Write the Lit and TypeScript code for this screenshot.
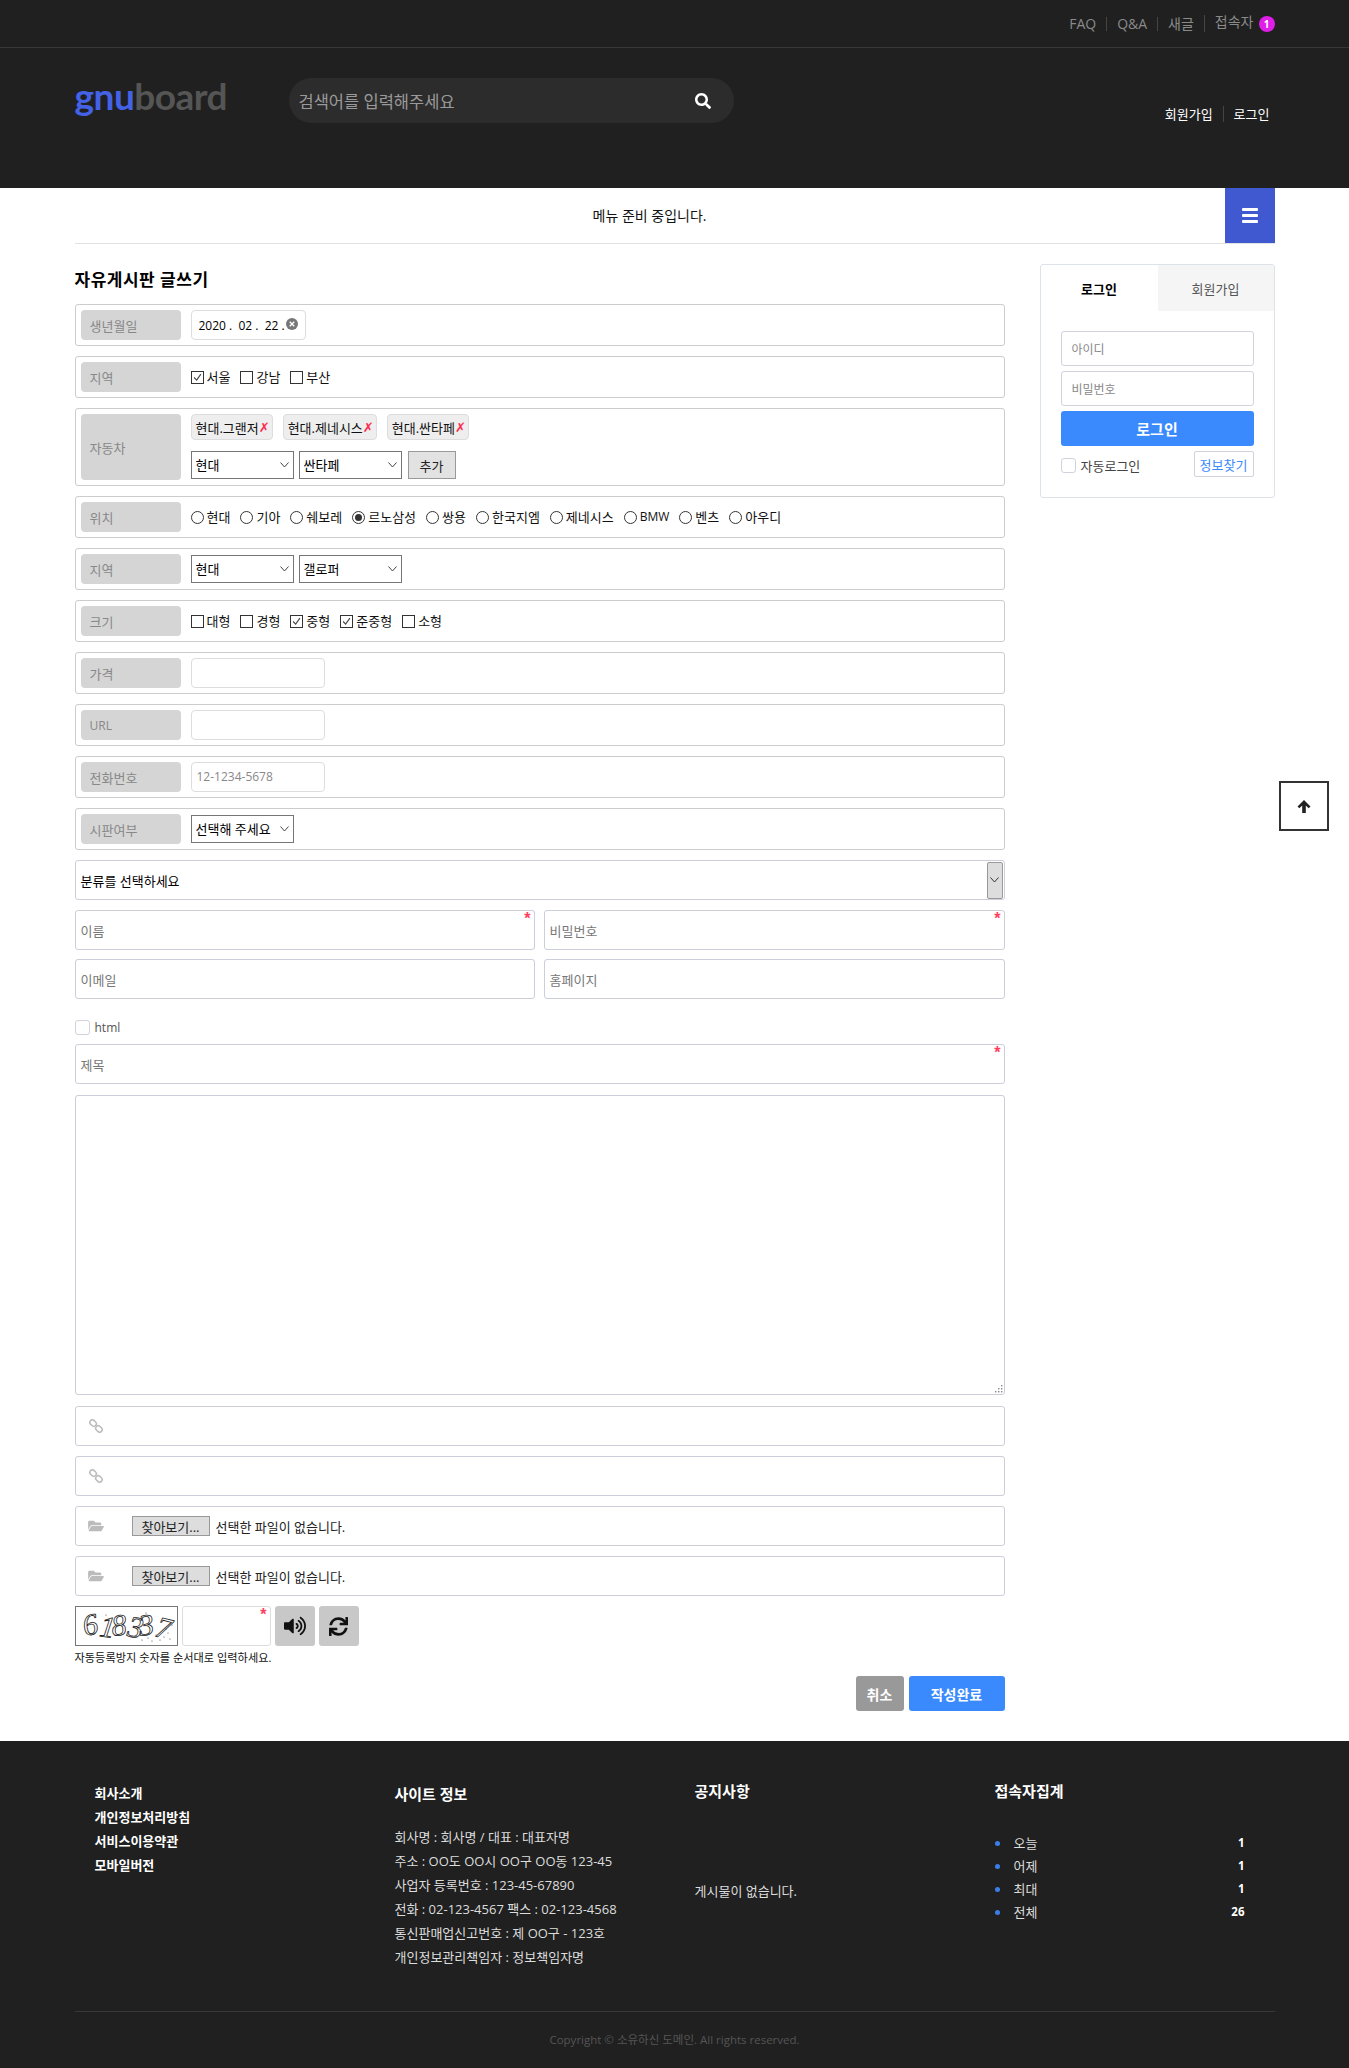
import { LitElement, html, css, svg } from "lit";
import { customElement } from "lit/decorators.js";

const I = {
  search: "M505 442.7L405.3 343c-4.5-4.5-10.6-7-17-7H372c27.6-35.3 44-79.7 44-128C416 93.1 322.9 0 208 0S0 93.1 0 208s93.1 208 208 208c48.3 0 92.7-16.4 128-44v16.3c0 6.4 2.5 12.5 7 17l99.7 99.7c9.4 9.4 24.6 9.4 33.9 0l28.3-28.3c9.4-9.4 9.4-24.6.1-34zM208 336c-70.7 0-128-57.2-128-128 0-70.7 57.2-128 128-128 70.7 0 128 57.2 128 128 0 70.7-57.2 128-128 128z",
  up: "M7 0l6.5 6.5-1.8 1.8L8.8 5.4V13H5.2V5.4L2.3 8.3 .5 6.5z",
  folder: "M572.694 292.093L500.27 416.248A63.997 63.997 0 0 1 444.989 448H45.025c-18.523 0-30.064-20.093-20.731-36.093l72.424-124.155A64 64 0 0 1 152 256h399.964c18.523 0 30.064 20.093 20.73 36.093zM152 224h328v-48c0-26.51-21.49-48-48-48H272l-64-64H48C21.49 64 0 85.49 0 112v278.046l69.077-118.418C86.214 242.25 117.989 224 152 224z",
  volume: "M215.03 71.05L126.06 160H24c-13.26 0-24 10.74-24 24v144c0 13.25 10.74 24 24 24h102.06l88.97 88.95c15.03 15.03 40.97 4.47 40.97-16.97V88.02c0-21.46-25.96-32-40.97-16.97zm233.32-51.08c-11.17-7.33-26.18-4.24-33.51 6.95-7.34 11.17-4.22 26.18 6.95 33.51 66.27 43.49 105.82 116.6 105.82 195.58 0 78.98-39.55 152.09-105.82 195.58-11.17 7.32-14.29 22.34-6.95 33.5 7.04 10.71 21.93 14.56 33.51 6.95C528.27 439.58 576 351.33 576 256S528.27 72.43 448.35 19.97zM480 256c0-63.53-32.06-121.94-85.77-156.24-11.19-7.14-26.03-3.82-33.12 7.46s-3.78 26.21 7.41 33.36C408.27 165.97 432 209.11 432 256s-23.73 90.03-63.48 115.42c-11.19 7.14-14.5 22.07-7.41 33.36 6.51 10.36 21.12 15.14 33.12 7.46C447.94 377.94 480 319.54 480 256zm-141.77-76.87c-11.58-6.33-26.19-2.16-32.61 9.45-6.39 11.61-2.16 26.2 9.45 32.61C327.98 228.28 336 241.63 336 256c0 14.38-8.02 27.72-20.92 34.81-11.61 6.41-15.84 21-9.45 32.61 6.44 11.66 21.05 15.8 32.61 9.45 28.23-15.55 45.77-45 45.77-76.88s-17.54-61.32-45.78-76.86z",
  sync: "M440.65 12.57l4 82.77A247.16 247.16 0 0 0 255.83 8C134.73 8 33.91 94.92 12.29 209.82A12 12 0 0 0 24.09 224h49.05a12 12 0 0 0 11.67-9.26 175.91 175.91 0 0 1 317-56.94l-101.46-4.86a12 12 0 0 0-12.57 12v47.41a12 12 0 0 0 12 12H500a12 12 0 0 0 12-12V12a12 12 0 0 0-12-12h-47.37a12 12 0 0 0-11.98 12.57zM255.83 432a175.61 175.61 0 0 1-146-77.8l101.8 4.87a12 12 0 0 0 12.57-12v-47.4a12 12 0 0 0-12-12H12a12 12 0 0 0-12 12V500a12 12 0 0 0 12 12h47.35a12 12 0 0 0 12-12.6l-4.15-82.57A247.17 247.17 0 0 0 255.83 504c121.11 0 221.93-86.92 243.55-201.82a12 12 0 0 0-11.8-14.18h-49.05a12 12 0 0 0-11.67 9.26A175.86 175.86 0 0 1 255.83 432z",
};

const icon = (d: string, vb: string, cls: string) =>
  html`<svg class=${cls} viewBox=${vb} fill="currentColor" aria-hidden="true">${svg`<path d=${d}></path>`}</svg>`;

const linkIcon = html`<svg class="ico-link" viewBox="0 0 14 14" fill="none" stroke="#bbb" stroke-width="1.5" aria-hidden="true">
  <rect x="0.6" y="1.6" width="7" height="5" rx="2.5" transform="rotate(45 4.1 4.1)"></rect>
  <rect x="6.4" y="7.4" width="7" height="5" rx="2.5" transform="rotate(45 9.9 9.9)"></rect>
</svg>`;

const check = (on: boolean, text: string) => html`<label class="opt"><span class="box">${on
  ? html`<svg viewBox="0 0 13 13" fill="none" stroke="#444" stroke-width="1.3"><path d="M2.5 6.5l3 3 5-7"></path></svg>`
  : ""}</span><span>${text}</span></label>`;

const radio = (on: boolean, text: string) => html`<label class="opt"><span class="rad">${on ? html`<i></i>` : ""}</span><span class=${text === "BMW" ? "latin" : ""}>${text}</span></label>`;

const sel = (text: string) => html`<span class="selw"><select class="sel"><option>${text}</option></select><svg viewBox="0 0 9 6" fill="none" stroke="#444" stroke-width="1"><path d="M0.5 0.5l4 4.5 4-4.5"></path></svg></span>`;

@customElement("app-root")
export class AppRoot extends LitElement {
  static styles = css`
    :host { display: block; position: relative; font-family: "Open Sans", "Noto Sans CJK KR", sans-serif; font-size: 13px; color: #000; background: #fff; }
    * { box-sizing: border-box; }
    .wrap { width: 1200px; margin: 0 auto; }
    a { color: inherit; text-decoration: none; }

    .head { background: #202020; height: 188px; }
    .top { height: 48px; border-bottom: 1px solid #383838; }
    .top .wrap { display: flex; justify-content: flex-end; align-items: center; height: 47px; color: #8a8a8a; font-size: 14px; }
    .top a { padding: 0 10px; line-height: 14px; border-left: 1px solid #444; }
    .top a:first-child { border-left: 0; }
    .top a.cnt { padding-right: 0; }
    .badge { display: inline-flex; width: 16px; height: 16px; border-radius: 50%; background: #e01ee8; color: #fff; font-size: 10px; font-weight: 700; align-items: center; justify-content: center; margin-left: 5px; line-height: 16px; vertical-align: -1px; }
    .hmain { display: flex; padding-top: 30px; align-items: flex-start; }
    .logo { width: 214px; font-family: "Lato", sans-serif; font-weight: 700; font-size: 37px; line-height: 36px; letter-spacing: -0.5px; color: #555; height: 36px; }
    .logo b { color: #4362e6; font-weight: 700; }
    .search { width: 445px; height: 45px; border-radius: 23px; background: #2c2c2c; display: flex; align-items: center; padding: 0 23px 0 10px; color: #9a9a9a; font-size: 16.5px; }
    .search span { flex: 1; }
    .ico-search { width: 16px; height: 16px; color: #fff; }
    .hlinks { margin-left: auto; margin-right: 5px; margin-top: 28px; display: flex; align-items: center; color: #fff; font-size: 13px; line-height: 16px; }
    .hlinks a + a { margin-left: 10px; padding-left: 10px; border-left: 1px solid #444; }

    .nav { display: flex; height: 56px; border-bottom: 1px solid #e2e2e2; align-items: stretch; }
    .nav .txt { flex: 1; text-align: center; line-height: 55px; font-size: 14px; color: #111; }
    .burger { width: 50px; height: 55px; background: #4159d0; display: flex; flex-direction: column; align-items: center; justify-content: center; gap: 3px; }
    .burger i { display: block; width: 16px; height: 3px; background: #fff; border-radius: 1px; }

    .cols { display: flex; justify-content: space-between; align-items: flex-start; padding-top: 20px; }
    .left { width: 930px; }
    h2 { margin: 0 0 8px; font-size: 17px; font-weight: 700; line-height: 32px; letter-spacing: 0.5px; }

    .row { display: flex; border: 1px solid #ccc; border-radius: 3px; padding: 5px; margin-bottom: 10px; min-height: 42px; }
    .lab { flex: none; width: 100px; margin-right: 10px; background: #d5d5d5; border-radius: 4px; color: #888; display: flex; align-items: center; padding-left: 9px; font-size: 13px; }
    .lab .latin { font-size: 12px; }
    .val { flex: 1; display: flex; align-items: center; gap: 5px; min-width: 0; }
    .val.gap10 { gap: 10px; }
    .stack { flex-direction: column; align-items: flex-start; gap: 11px; padding-bottom: 1px; }
    .stack > div { display: flex; align-items: center; gap: 5px; }
    .stack .tags { gap: 10px; }
    .date { width: 115px; height: 30px; border: 1px solid #ddd; border-radius: 4px; padding-left: 7px; display: flex; align-items: center; position: relative; font-size: 12px; white-space: pre; }
    .date i { position: absolute; right: 7px; top: 7px; width: 12px; height: 12px; background: #777; border-radius: 50%; display: flex; align-items: center; justify-content: center; }
    .date svg { width: 6px; height: 6px; }
    .opt { display: inline-flex; align-items: center; gap: 3px; font-size: 13px; line-height: 16px; color: #111; }
    .opt .latin { font-size: 12px; }
    .box { width: 13px; height: 13px; border: 1px solid #333; background: #fff; display: block; flex: none; }
    .box svg { display: block; width: 11px; height: 11px; }
    .rad { width: 13px; height: 13px; border: 1px solid #333; border-radius: 50%; background: #fff; display: flex; align-items: center; justify-content: center; flex: none; }
    .rad i { width: 7px; height: 7px; border-radius: 50%; background: #333; }
    .tag { height: 26px; padding: 0 2px 0 4px; background: #eee; border: 1px solid #ddd; border-radius: 4px; display: flex; align-items: center; font-size: 13px; color: #111; }
    .tag em { color: #ff2a4d; font-style: italic; font-size: 13px; font-weight: 400; font-family: "DejaVu Sans", sans-serif; }
    .selw { position: relative; display: block; width: 103px; height: 28px; }
    .selw svg { position: absolute; right: 5px; top: 11px; width: 9px; height: 6px; pointer-events: none; }
    .sel { display: block; appearance: none; -webkit-appearance: none; width: 103px; height: 28px; font-family: inherit; font-size: 13px; border: 1px solid #767676; background: #fff; color: #000; padding: 0 0 0 4px; border-radius: 0; }
    .addbtn { width: 48px; height: 28px; margin-left: 1px; background: #e2e2e2; border: 1px solid #999; display: flex; align-items: center; justify-content: center; font-size: 13px; color: #222; }
    .inp { width: 134px; height: 30px; border: 1px solid #ddd; border-radius: 4px; padding: 0 5px; font-size: 12px; line-height: 28px; color: #888; }

    .f { position: relative; height: 40px; border: 1px solid #ccced9; border-radius: 3px; display: flex; align-items: center; padding-left: 5px; font-size: 13px; color: #777; }
    .catsel { margin-bottom: 10px; color: #000; justify-content: space-between; padding-right: 1px; }
    .arrow { width: 16px; height: 37px; background: #ddd; border: 1px solid #999; border-radius: 2px; display: flex; align-items: center; justify-content: center; }
    .arrow svg { width: 9px; height: 6px; }
    .two { display: grid; grid-template-columns: 460px 461px; gap: 9px; margin-bottom: 9px; }
    .two.last { margin-bottom: 0; }
    .req::after { content: "*"; position: absolute; right: 3px; top: -1px; font-family: "Liberation Sans", sans-serif; color: #ff3d5f; font-size: 16px; line-height: 18px; font-weight: 700; }
    .htmlrow { height: 45px; display: flex; align-items: center; gap: 5px; color: #555; font-size: 12px; padding-top: 12px; }
    .htmlrow span { width: 15px; height: 15px; border: 1px solid #d0d3db; border-radius: 3px; }
    .title { margin-bottom: 11px; }
    .ta { position: relative; margin-bottom: 11px; }
    textarea { display: block; width: 930px; height: 300px; border: 1px solid #ccced9; border-radius: 3px; margin: 0; background: #fff; resize: none; }
    .grip { position: absolute; right: 2px; bottom: 2px; width: 9px; height: 9px; color: #888; }
    .lk { margin-bottom: 10px; padding-left: 13px; }
    .ico-link { width: 14px; height: 14px; }
    .ico-folder { width: 16px; height: 14px; color: #bbb; flex: none; }
    .fl { margin-bottom: 10px; padding-left: 12px; color: #222; font-size: 13px; }
    .fbtn { margin-left: 28px; margin-right: 6px; width: 78px; height: 20px; background: #ddd; border: 1px solid #999; display: flex; align-items: center; justify-content: center; color: #222; font-size: 13px; }
    .cap { display: flex; height: 40px; }
    .capimg { width: 103px; height: 40px; border: 1px solid #777; background: #fff; overflow: hidden; }
    .capimg svg { display: block; }
    .capimg text { font-family: "Liberation Serif", serif; font-style: italic; font-size: 30px; fill: none; stroke: #222; stroke-width: 0.8; }
    .capimg circle { fill: #444; }
    .capin { position: relative; width: 89px; height: 40px; margin-left: 4px; border: 1px solid #ddd; border-radius: 3px; }
    .capbtn { width: 40px; height: 40px; margin-left: 4px; background: #c8c8c8; border-radius: 3px; display: flex; align-items: center; justify-content: center; color: #111; }
    .ico-vol { width: 22px; height: 20px; }
    .ico-sync { width: 19px; height: 19px; }
    .help { font-size: 11.2px; line-height: 16px; margin-top: 4px; color: #111; }
    .btns { display: flex; justify-content: flex-end; gap: 5px; margin: 10px 0 30px; }
    .btns div { height: 35px; border-radius: 3px; display: flex; align-items: center; justify-content: center; color: #fff; font-weight: 700; font-size: 14px; }
    .cancel { width: 48px; background: #999; }
    .done { width: 96px; background: #3a8afd; }

    aside { width: 235px; border: 1px solid #dde3e8; border-radius: 3px; height: 234px; padding: 0; }
    .tabs { display: flex; height: 46px; }
    .tabs div { display: flex; align-items: center; justify-content: center; font-size: 13px; }
    .tabs .on { width: 117px; font-weight: 700; color: #000; }
    .tabs .off { width: 116px; background: #f5f5f5; color: #555; }
    .lg { padding: 20px 20px 0; display: flex; flex-direction: column; gap: 5px; }
    .lg .i { height: 35px; border: 1px solid #d0d3db; border-radius: 3px; padding-left: 10px; display: flex; align-items: center; color: #888; font-size: 12px; }
    .lg .b { height: 35px; background: #3a8afd; color: #fff; border-radius: 3px; display: flex; align-items: center; justify-content: center; font-size: 15px; font-weight: 700; }
    .lgfoot { display: flex; justify-content: space-between; align-items: center; margin-top: 0; }
    .auto { display: flex; align-items: center; gap: 5px; font-size: 13px; color: #444; margin-top: 3px; }
    .auto span { width: 15px; height: 15px; border: 1px solid #d0d3db; border-radius: 3px; }
    .find { width: 60px; height: 26px; border: 1px solid #d0d3db; border-radius: 2px; color: #3a8afd; display: flex; align-items: center; justify-content: center; font-size: 13px; }

    .totop { position: absolute; left: 1279px; top: 781px; width: 50px; height: 50px; border: 2px solid #333; background: #fff; color: #222; display: flex; align-items: center; justify-content: center; }
    .totop svg { width: 14px; height: 13px; }

    footer { background: #202020; height: 327px; color: #ddd; }
    .fcols { display: grid; grid-template-columns: repeat(4, 300px); height: 271px; border-bottom: 1px solid #383838; }
    .fc { padding-left: 20px; font-size: 13px; line-height: 24px; }
    .fc1 { padding-top: 40px; font-weight: 700; color: #fff; }
    .fc h3 { margin: 0; font-size: 15px; font-weight: 700; color: #fff; line-height: 24px; }
    .fc2 { padding-top: 41px; }
    .fc2 h3 { margin-bottom: 19px; }
    .fc3 { padding-top: 38px; }
    .fc3 p { margin: 76px 0 0; }
    .fc4 { padding-top: 38px; }
    .stats { margin-top: 28px; padding-right: 30px; }
    .st { display: flex; align-items: center; height: 23px; }
    .st i { width: 5px; height: 5px; border-radius: 50%; background: #3a7fe8; margin-right: 14px; margin-top: 2px; }
    .st span { flex: 1; }
    .st b { color: #fff; font-weight: 700; font-size: 11.5px; }
    .copy { text-align: center; color: #555; font-size: 11.5px; line-height: 56px; }
  `;

  render() {
    const r = ["현대", "기아", "쉐보레", "르노삼성", "쌍용", "한국지엠", "제네시스", "BMW", "벤츠", "아우디"];
    const s: [string, boolean][] = [["대형", false], ["경형", false], ["중형", true], ["준중형", true], ["소형", false]];
    const stats = [["오늘", "1"], ["어제", "1"], ["최대", "1"], ["전체", "26"]];
    const noise = [[60, 30], [66, 33], [72, 31], [80, 28], [84, 33], [88, 30], [92, 26], [90, 22], [94, 32], [76, 34], [12, 12], [30, 8], [70, 6], [96, 18]];
    const grip = [[7, 1], [7, 4], [4, 4], [7, 7], [4, 7], [1, 7]];
    return html`
      <header class="head">
        <div class="top"><div class="wrap">
          <a>FAQ</a><a>Q&amp;A</a><a>새글</a><a class="cnt">접속자<span class="badge">1</span></a>
        </div></div>
        <div class="wrap hmain">
          <div class="logo"><b>gnu</b>board</div>
          <div class="search"><span>검색어를 입력해주세요</span>${icon(I.search, "0 0 512 512", "ico-search")}</div>
          <div class="hlinks"><a>회원가입</a><a>로그인</a></div>
        </div>
      </header>
      <div class="wrap nav"><div class="txt">메뉴 준비 중입니다.</div><div class="burger"><i></i><i></i><i></i></div></div>

      <div class="wrap cols">
        <main class="left">
          <h2>자유게시판 글쓰기</h2>
          <div class="row"><div class="lab">생년월일</div><div class="val"><div class="date">2020 .  02 .  22 .<i><svg viewBox="0 0 8 8" stroke="#fff" stroke-width="1.8"><path d="M1 1l6 6M7 1l-6 6"></path></svg></i></div></div></div>
          <div class="row"><div class="lab">지역</div><div class="val gap10">${check(true, "서울")}${check(false, "강남")}${check(false, "부산")}</div></div>
          <div class="row"><div class="lab">자동차</div><div class="val stack">
            <div class="tags"><div class="tag">현대.그랜저<em>✗</em></div><div class="tag">현대.제네시스<em>✗</em></div><div class="tag">현대.싼타페<em>✗</em></div></div>
            <div>${sel("현대")}${sel("싼타페")}<div class="addbtn">추가</div></div>
          </div></div>
          <div class="row"><div class="lab">위치</div><div class="val gap10">${r.map((t, i) => radio(i === 3, t))}</div></div>
          <div class="row"><div class="lab">지역</div><div class="val">${sel("현대")}${sel("갤로퍼")}</div></div>
          <div class="row"><div class="lab">크기</div><div class="val gap10">${s.map(([t, on]) => check(on, t))}</div></div>
          <div class="row"><div class="lab">가격</div><div class="val"><div class="inp"></div></div></div>
          <div class="row"><div class="lab"><span class="latin">URL</span></div><div class="val"><div class="inp"></div></div></div>
          <div class="row"><div class="lab">전화번호</div><div class="val"><div class="inp">12-1234-5678</div></div></div>
          <div class="row"><div class="lab">시판여부</div><div class="val">${sel("선택해 주세요")}</div></div>

          <div class="f catsel"><span>분류를 선택하세요</span><div class="arrow"><svg viewBox="0 0 9 6" fill="none" stroke="#333" stroke-width="1"><path d="M0.5 0.5l4 4.5 4-4.5"></path></svg></div></div>
          <div class="two"><div class="f req">이름</div><div class="f req">비밀번호</div></div>
          <div class="two last"><div class="f">이메일</div><div class="f">홈페이지</div></div>
          <div class="htmlrow"><span></span>html</div>
          <div class="f req title">제목</div>
          <div class="ta"><textarea aria-label="내용"></textarea><svg class="grip" viewBox="0 0 9 9" fill="currentColor" aria-hidden="true">${grip.map(([x, y]) => svg`<rect x=${x} y=${y} width="1.4" height="1.4"></rect>`)}</svg></div>
          <div class="f lk">${linkIcon}</div>
          <div class="f lk">${linkIcon}</div>
          <div class="f fl">${icon(I.folder, "0 0 576 512", "ico-folder")}<div class="fbtn">찾아보기...</div>선택한 파일이 없습니다.</div>
          <div class="f fl">${icon(I.folder, "0 0 576 512", "ico-folder")}<div class="fbtn">찾아보기...</div>선택한 파일이 없습니다.</div>
          <div class="cap">
            <div class="capimg"><svg width="101" height="38" viewBox="0 0 101 38"><text x="9" y="29" textLength="84" rotate="-12 8 -6 10 -8 14">618337</text>${noise.map(([x, y]) => svg`<circle cx=${x} cy=${y} r="0.6"></circle>`)}</svg></div>
            <div class="capin req"></div>
            <div class="capbtn">${icon(I.volume, "0 0 576 512", "ico-vol")}</div>
            <div class="capbtn">${icon(I.sync, "0 0 512 512", "ico-sync")}</div>
          </div>
          <div class="help">자동등록방지 숫자를 순서대로 입력하세요.</div>
          <div class="btns"><div class="cancel">취소</div><div class="done">작성완료</div></div>
        </main>
        <aside>
          <div class="tabs"><div class="on">로그인</div><div class="off">회원가입</div></div>
          <div class="lg">
            <div class="i">아이디</div>
            <div class="i">비밀번호</div>
            <div class="b">로그인</div>
            <div class="lgfoot"><div class="auto"><span></span>자동로그인</div><div class="find">정보찾기</div></div>
          </div>
        </aside>
      </div>

      <footer>
        <div class="wrap fcols">
          <div class="fc fc1"><div>회사소개</div><div>개인정보처리방침</div><div>서비스이용약관</div><div>모바일버전</div></div>
          <div class="fc fc2"><h3>사이트 정보</h3>
            <div>회사명 : 회사명 / 대표 : 대표자명</div><div>주소 : OO도 OO시 OO구 OO동 123-45</div><div>사업자 등록번호 : 123-45-67890</div><div>전화 : 02-123-4567 팩스 : 02-123-4568</div><div>통신판매업신고번호 : 제 OO구 - 123호</div><div>개인정보관리책임자 : 정보책임자명</div>
          </div>
          <div class="fc fc3"><h3>공지사항</h3><p>게시물이 없습니다.</p></div>
          <div class="fc fc4"><h3>접속자집계</h3><div class="stats">${stats.map(([a, b]) => html`<div class="st"><i></i><span>${a}</span><b>${b}</b></div>`)}</div></div>
        </div>
        <div class="wrap copy">Copyright © 소유하신 도메인. All rights reserved.</div>
      </footer>

      <div class="totop">${icon(I.up, "0 0 14 13", "")}</div>
    `;
  }
}
